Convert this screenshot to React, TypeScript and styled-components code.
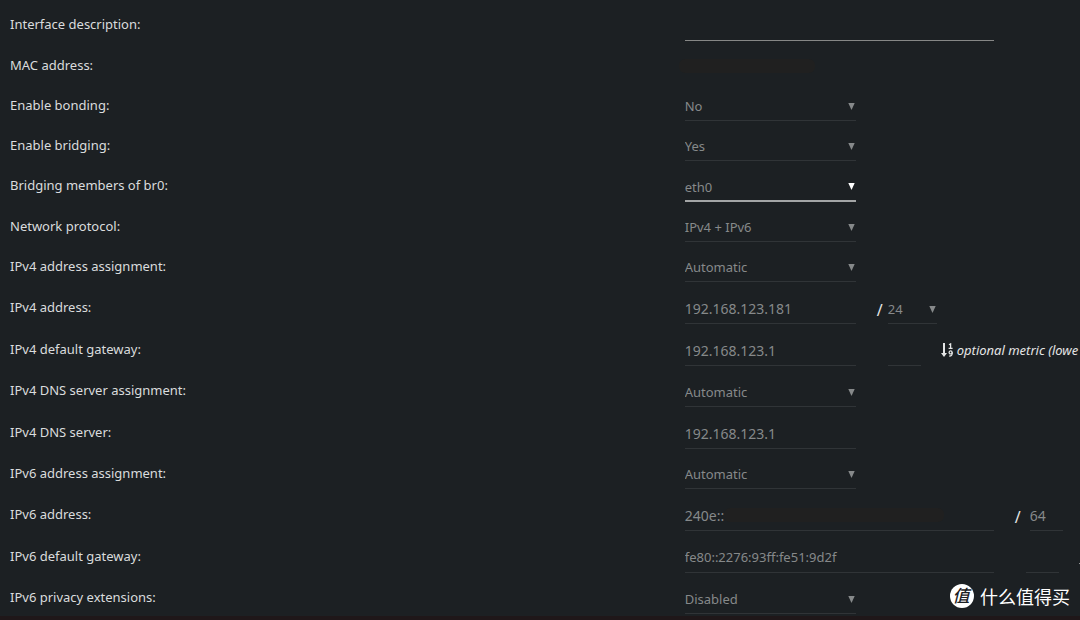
import React, { ReactNode } from "react";
import styled, { createGlobalStyle } from "styled-components";

const GlobalStyle = createGlobalStyle`
  *, *::before, *::after { box-sizing: border-box; }
  body {
    margin: 0;
    background: #1c2023;
    color: #dadcdd;
    font-family: "Noto Sans", "Open Sans", "Noto Sans CJK SC", sans-serif;
    font-size: 13px;
    line-height: 20px;
  }
`;

const Page = styled.main`
  position: relative;
  min-height: 100vh;
  overflow: hidden;
  display: flex;
  flex-direction: column;
`;

const Form = styled.form`
  flex: 1;
`;

const rowHeights = { compact: 40, regular: 41, tall: 42 };
type RowSize = keyof typeof rowHeights;

const Row = styled.div<{ $size: RowSize }>`
  display: grid;
  grid-template-columns: 63.4% 1fr;
  align-items: end;
  height: ${(p) => rowHeights[p.$size]}px;
  white-space: nowrap;
`;

const Label = styled.label<{ $size: RowSize }>`
  padding: 0 0 ${(p) => (p.$size === "compact" ? 6 : 7)}px 10px;
`;

const Value = styled.div`
  display: flex;
  align-items: flex-end;
`;

type Tone = "active" | "enabled" | "muted";
const lineColor = (tone?: Tone) =>
  tone === "active" ? "#a3a5a6" : tone === "enabled" ? "#868786" : "#303437";

const TextField = styled.input<{ $width: number; $tone?: Tone; $numeric?: boolean }>`
  flex: none;
  width: ${(p) => p.$width}px;
  height: 30px;
  padding: 0 0 1px;
  border: 0;
  border-bottom: 1px solid ${(p) => lineColor(p.$tone)};
  border-radius: 0;
  outline: 0;
  background: transparent;
  color: #86898a;
  font: inherit;
  font-size: ${(p) => (p.$numeric ? 14 : 13)}px;
`;

const SelectBox = styled.span<{ $width: number; $tone?: Tone }>`
  position: relative;
  flex: none;
  width: ${(p) => p.$width}px;
  border-bottom: ${(p) => (p.$tone === "active" ? 2 : 1)}px solid ${(p) => lineColor(p.$tone)};
`;

const Select = styled.select<{ $tone?: Tone }>`
  display: block;
  width: 100%;
  height: 27px;
  padding: 0 0 ${(p) => (p.$tone === "active" ? 0 : 2)}px;
  border: 0;
  outline: 0;
  appearance: none;
  background: transparent;
  color: #86898a;
  font: inherit;
`;

const Arrow = styled.svg<{ $tone?: Tone }>`
  position: absolute;
  right: 1px;
  top: 10px;
  width: 7px;
  height: 7px;
  fill: ${(p) => (p.$tone === "active" ? "#ffffff" : "#86898a")};
  pointer-events: none;
`;

const Slash = styled.span<{ $wide?: boolean }>`
  width: ${(p) => (p.$wide ? 36 : 32)}px;
  padding: 0 ${(p) => (p.$wide ? 9 : 5)}px 4px 0;
  text-align: right;
  font-size: 16px;
  color: #e4e5e5;
`;

const Spacer = styled.span`
  flex: none;
  width: 32px;
`;

const Hint = styled.span`
  display: flex;
  align-items: center;
  gap: 3px;
  padding: 0 0 6px 20px;
  font-style: italic;
  color: #e4e5e5;
`;

const SortIcon = styled.svg`
  width: 13px;
  height: 14px;
  fill: none;
  stroke: currentColor;
`;

const Redaction = styled.span<{ $width: number }>`
  width: ${(p) => p.$width}px;
  height: 14px;
  border-radius: 6px;
  background: #202020;
`;

const MacValue = styled(Value)`
  padding: 0 0 8px;
  margin-left: -6px;
`;

const RedactedField = styled.span`
  position: relative;
  display: flex;
`;

const Cover = styled(Redaction)`
  position: absolute;
  left: 39px;
  top: 7px;
`;

const Watermark = styled.div`
  position: absolute;
  right: 10px;
  bottom: 12px;
  display: flex;
  align-items: center;
  gap: 6px;
  color: #ffffff;
  font: 400 18px/24px "Noto Sans CJK SC", sans-serif;
`;

const Badge = styled.span`
  display: grid;
  place-items: center;
  width: 24px;
  height: 24px;
  border-radius: 50%;
  background: #ffffff;
  color: #1c2023;
  font-size: 17px;
  font-weight: 500;
  font-style: italic;
  line-height: 22px;
  padding: 0 2px 2px 0;
`;

const BottomEdge = styled.footer`
  height: 4px;
  background: #1f1719;
`;

function Dropdown({ id, value, width = 171, tone, label }: {
  id: string; value: string; width?: number; tone?: Tone; label?: string;
}) {
  return (
    <SelectBox $width={width} $tone={tone}>
      <Select id={id} $tone={tone} aria-label={label} defaultValue={value}>
        <option>{value}</option>
      </Select>
      <Arrow viewBox="0 0 7 7" $tone={tone} aria-hidden="true">
        <path d="M0.300 0h6.400L3.500 7z" />
      </Arrow>
    </SelectBox>
  );
}

function MetricIcon() {
  return (
    <SortIcon viewBox="0 0 13 14" aria-hidden="true">
      <path d="M3 0v12" strokeWidth="2" />
      <path d="M0 10h6L3 14z" fill="currentColor" stroke="none" />
      <path d="M8 1.8l1.6-.9v4.4M7.600 5.300h4" strokeWidth="1.3" />
      <circle cx="9.6" cy="9.4" r="1.5" strokeWidth="1.3" />
      <path d="M11.200 9.200c.2 2.400-.6 3.800-3 3.900" strokeWidth="1.3" />
    </SortIcon>
  );
}

function Field({ id, label, size, children }: {
  id?: string; label: string; size: RowSize; children: ReactNode;
}) {
  return (
    <Row $size={size}>
      <Label htmlFor={id} $size={size}>{label}</Label>
      {children}
    </Row>
  );
}

export default function App() {
  return (
    <Page>
      <GlobalStyle />
      <Form>
        <Field id="description" label="Interface description:" size="regular">
          <Value><TextField id="description" $width={309} $tone="enabled" /></Value>
        </Field>
        <Field label="MAC address:" size="compact">
          <MacValue><Redaction $width={136} /></MacValue>
        </Field>
        <Field id="bonding" label="Enable bonding:" size="compact">
          <Value><Dropdown id="bonding" value="No" /></Value>
        </Field>
        <Field id="bridging" label="Enable bridging:" size="compact">
          <Value><Dropdown id="bridging" value="Yes" /></Value>
        </Field>
        <Field id="members" label="Bridging members of br0:" size="regular">
          <Value><Dropdown id="members" value="eth0" tone="active" /></Value>
        </Field>
        <Field id="protocol" label="Network protocol:" size="compact">
          <Value><Dropdown id="protocol" value="IPv4 + IPv6" /></Value>
        </Field>
        <Field id="assign4" label="IPv4 address assignment:" size="compact">
          <Value><Dropdown id="assign4" value="Automatic" /></Value>
        </Field>
        <Field id="address4" label="IPv4 address:" size="tall">
          <Value>
            <TextField id="address4" $numeric $width={171} defaultValue="192.168.123.181" />
            <Slash>/</Slash>
            <Dropdown id="mask4" label="IPv4 netmask" value="24" width={49} />
          </Value>
        </Field>
        <Field id="gateway4" label="IPv4 default gateway:" size="tall">
          <Value>
            <TextField id="gateway4" $numeric $width={171} defaultValue="192.168.123.1" />
            <Spacer />
            <TextField aria-label="IPv4 metric" $width={33} />
            <Hint><MetricIcon />optional metric (lowe</Hint>
          </Value>
        </Field>
        <Field id="dnsAssign4" label="IPv4 DNS server assignment:" size="regular">
          <Value><Dropdown id="dnsAssign4" value="Automatic" /></Value>
        </Field>
        <Field id="dns4" label="IPv4 DNS server:" size="tall">
          <Value><TextField id="dns4" $numeric $width={171} defaultValue="192.168.123.1" /></Value>
        </Field>
        <Field id="assign6" label="IPv6 address assignment:" size="compact">
          <Value><Dropdown id="assign6" value="Automatic" /></Value>
        </Field>
        <Field id="address6" label="IPv6 address:" size="tall">
          <Value>
            <RedactedField>
              <TextField id="address6" $numeric $width={309} defaultValue="240e::" />
              <Cover $width={220} />
            </RedactedField>
            <Slash $wide>/</Slash>
            <TextField aria-label="IPv6 prefix length" $numeric $width={33} defaultValue="64" />
          </Value>
        </Field>
        <Field id="gateway6" label="IPv6 default gateway:" size="tall">
          <Value>
            <TextField id="gateway6" $width={309} defaultValue="fe80::2276:93ff:fe51:9d2f" />
            <Spacer />
            <TextField aria-label="IPv6 metric" $width={33} />
            <Hint><MetricIcon /></Hint>
          </Value>
        </Field>
        <Field id="privacy" label="IPv6 privacy extensions:" size="regular">
          <Value><Dropdown id="privacy" value="Disabled" /></Value>
        </Field>
      </Form>
      <BottomEdge />
      <Watermark><Badge>值</Badge>什么值得买</Watermark>
    </Page>
  );
}
